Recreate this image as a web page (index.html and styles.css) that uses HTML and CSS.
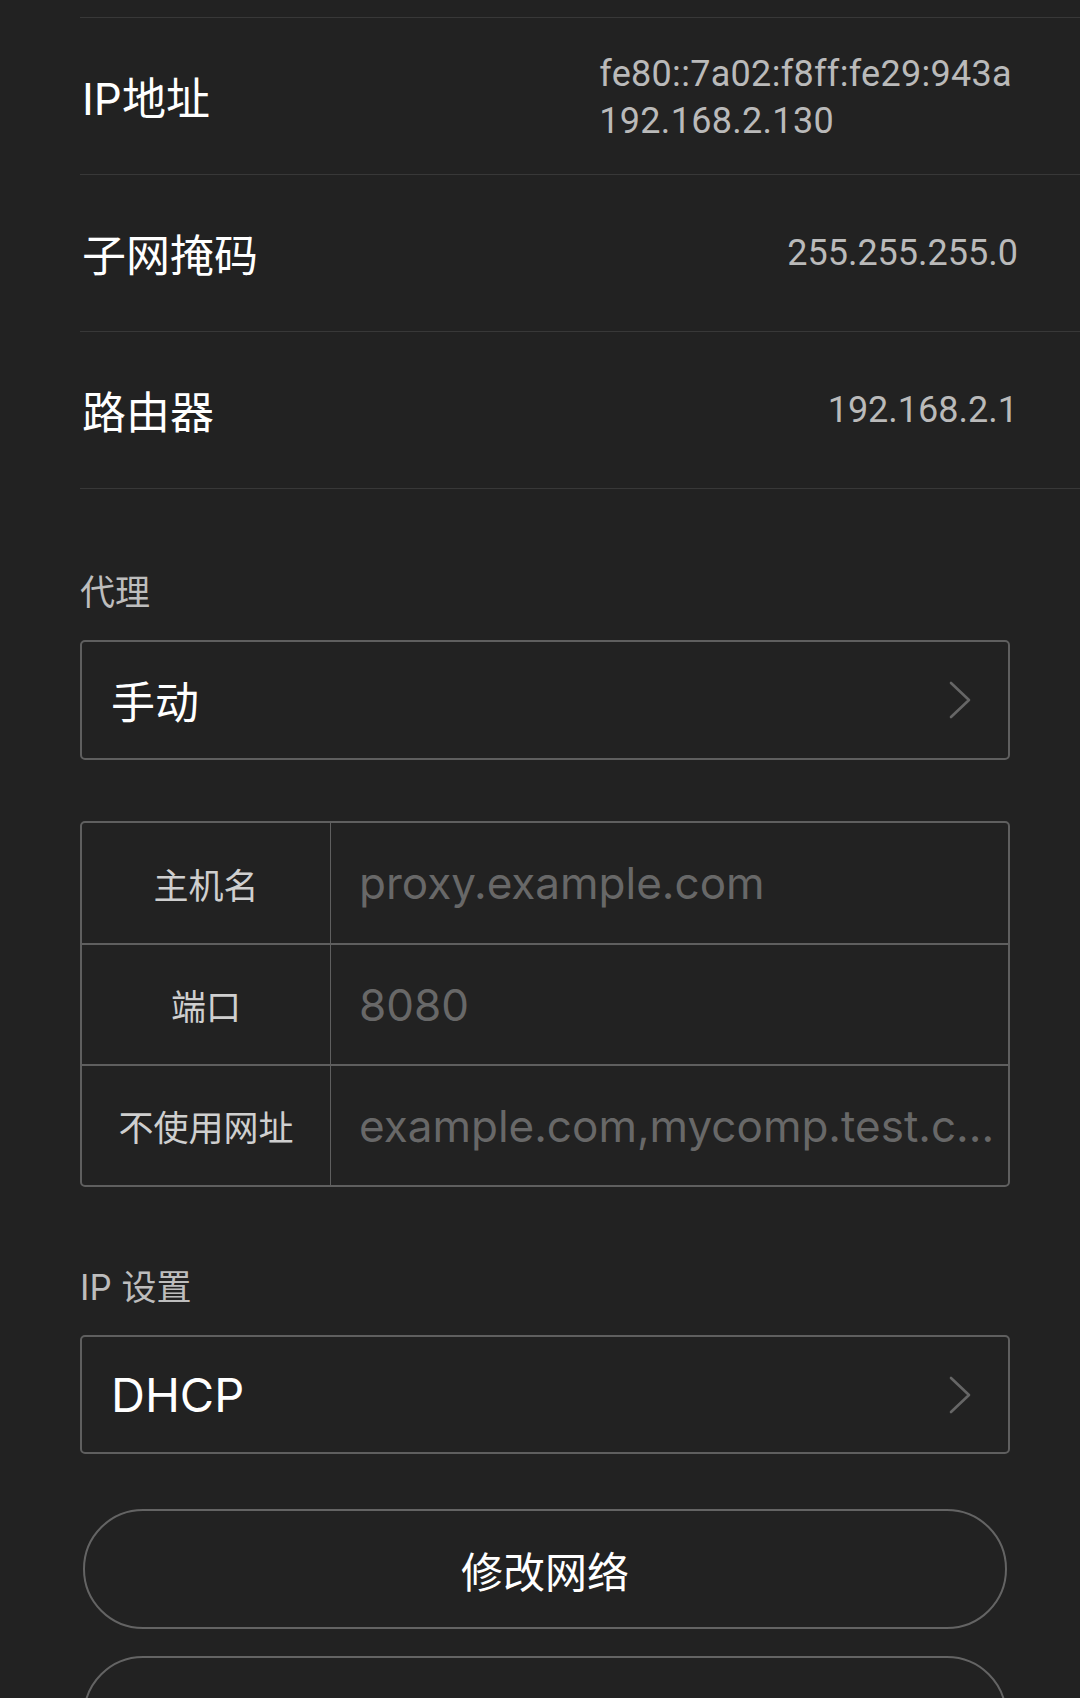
FILE: index.html
```html
<!DOCTYPE html>
<html lang="zh-CN">
<head>
<meta charset="utf-8">
<title>网络详情</title>
<link rel="stylesheet" href="styles.css">
</head>
<body>
<div class="page">
  <div class="info-list">
    <div class="info-row">
      <div class="info-label">IP地址</div>
      <div class="info-value info-value--multi">fe80::7a02:f8ff:fe29:943a<br>192.168.2.130</div>
    </div>
    <div class="info-row">
      <div class="info-label">子网掩码</div>
      <div class="info-value">255.255.255.0</div>
    </div>
    <div class="info-row">
      <div class="info-label">路由器</div>
      <div class="info-value">192.168.2.1</div>
    </div>
  </div>

  <div class="section">
    <div class="section-title">代理</div>
    <div class="select-box">
      <span class="select-text">手动</span>
      <svg class="chevron" width="24" height="40" viewBox="0 0 24 40"><polyline points="3,3 21,20 3,37" fill="none" stroke="#666" stroke-width="2.6" stroke-linecap="round" stroke-linejoin="round"/></svg>
    </div>

    <div class="proxy-table">
      <div class="proxy-row">
        <div class="proxy-label">主机名</div>
        <div class="proxy-input">proxy.example.com</div>
      </div>
      <div class="proxy-row">
        <div class="proxy-label">端口</div>
        <div class="proxy-input">8080</div>
      </div>
      <div class="proxy-row">
        <div class="proxy-label">不使用网址</div>
        <div class="proxy-input">example.com,mycomp.test.c...</div>
      </div>
    </div>
  </div>

  <div class="section section--ip">
    <div class="section-title">IP 设置</div>
    <div class="select-box">
      <span class="select-text select-text--latin">DHCP</span>
      <svg class="chevron" width="24" height="40" viewBox="0 0 24 40"><polyline points="3,3 21,20 3,37" fill="none" stroke="#666" stroke-width="2.6" stroke-linecap="round" stroke-linejoin="round"/></svg>
    </div>
  </div>

  <div class="actions">
    <div class="pill-btn">修改网络</div>
    <div class="pill-btn">&nbsp;</div>
  </div>
</div>
</body>
</html>
```

FILE: styles.css
```css
html, body {
  margin: 0;
  padding: 0;
  background: #222222;
}
body {
  font-family: Inter, "Noto Sans CJK SC", sans-serif;
  color: #ffffff;
  height: 1698px;
  overflow: hidden;
}
.page {
  padding-top: 17px;
  padding-left: 80px;
}
.info-list {
  border-top: 1px solid #383838;
}
.info-row {
  display: flex;
  align-items: center;
  justify-content: space-between;
  height: 156px;
  border-bottom: 1px solid #383838;
  padding-right: 62px;
}
.info-label {
  font-size: 44px;
  color: #ffffff;
  padding-left: 2px;
}
.info-value {
  font-family: Roboto, "Noto Sans CJK SC", sans-serif;
  font-size: 36px;
  color: #bababa;
  line-height: 47px;
}
.info-value--multi {
  margin-right: 6px;
  margin-top: 4px;
  letter-spacing: 0.3px;
}
.section {
  width: 930px;
  padding-top: 78px;
}
.section--ip {
  padding-top: 75px;
}
.section-title {
  font-size: 35px;
  color: #bdbdbd;
  line-height: 50px;
  height: 50px;
}
.select-box {
  margin-top: 23px;
  box-sizing: border-box;
  height: 120px;
  border: 2px solid #5f5f5f;
  border-radius: 5px;
  display: flex;
  align-items: center;
  justify-content: space-between;
  padding-left: 29px;
  padding-right: 36px;
}
.section--ip .select-box {
  height: 119px;
}
.select-text {
  font-size: 44px;
  color: #ffffff;
}
.select-text--latin {
  font-size: 47px;
}
.chevron {
  display: block;
}
.proxy-table {
  margin-top: 61px;
  border: 2px solid #5f5f5f;
  border-radius: 5px;
}
.proxy-row {
  display: flex;
  height: 119px;
  border-top: 2px solid #5f5f5f;
}
.proxy-row:first-child {
  border-top: none;
  height: 120px;
}
.proxy-label {
  width: 248px;
  flex: none;
  display: flex;
  align-items: center;
  justify-content: center;
  font-size: 35px;
  color: #cfcfcf;
  border-right: 1px solid #5f5f5f;
}
.proxy-input {
  flex: 1;
  display: flex;
  align-items: center;
  padding-left: 28px;
  font-size: 44px;
  color: #686868;
  white-space: nowrap;
  overflow: hidden;
}
.actions {
  width: 930px;
  padding-top: 55px;
  display: flex;
  flex-direction: column;
  gap: 27px;
}
.pill-btn {
  margin: 0 3px;
  box-sizing: border-box;
  height: 120px;
  border: 2px solid #646464;
  border-radius: 60px;
  display: flex;
  align-items: center;
  justify-content: center;
  font-size: 42px;
  color: #ffffff;
}
```
